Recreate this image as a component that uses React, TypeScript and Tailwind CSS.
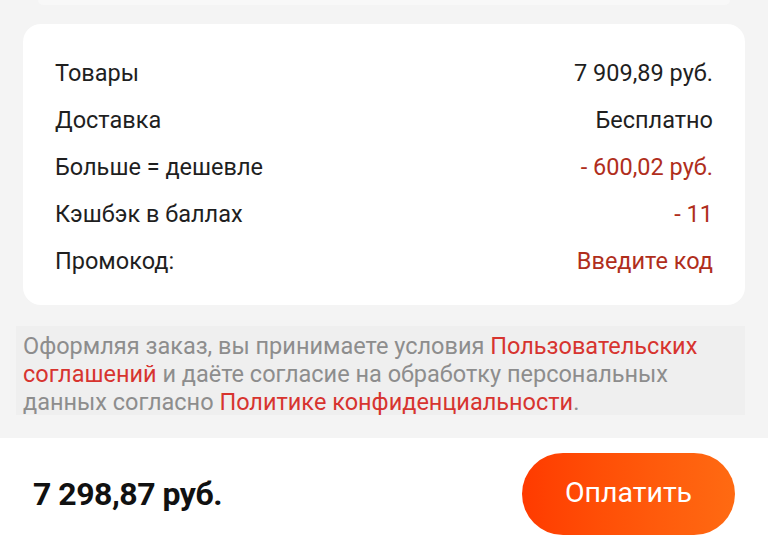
import React from "react";

const rows: { label: string; value: string; red?: boolean }[] = [
  { label: "Товары", value: "7 909,89 руб." },
  { label: "Доставка", value: "Бесплатно" },
  { label: "Больше = дешевле", value: "- 600,02 руб.", red: true },
  { label: "Кэшбэк в баллах", value: "- 11", red: true },
  { label: "Промокод:", value: "Введите код", red: true },
];

export default function App() {
  return (
    <div
      className="w-[768px] h-[549px] bg-[#f4f4f4] flex flex-col overflow-hidden"
      style={{ fontFamily: "Roboto, 'Noto Sans', sans-serif" }}
    >
      <div className="mx-[38px] h-[5px] bg-[#f8f8f8] rounded-b-[6px]" />
      <div className="mt-[19px] mx-[23px] w-[722px] h-[281px] bg-white rounded-[18px] pt-[26px] px-[32px] flex flex-col">
        {rows.map((r) => (
          <div key={r.label} className="flex justify-between items-center h-[47px]">
            <span className="text-[23.5px] text-[#1f1f1f] leading-none">{r.label}</span>
            <span className={`text-[23.5px] leading-none ${r.red ? "text-[#b02e1c]" : "text-[#1f1f1f]"}`}>
              {r.value}
            </span>
          </div>
        ))}
      </div>
      <div className="mt-[21px] ml-[16px] w-[729px] h-[89px] bg-[#efefef] pl-[7px] pr-[20px] pt-[6px]">
        <p className="text-[23.5px] leading-[28px] text-[#8d8d8d]">
          Оформляя заказ, вы принимаете условия{" "}
          <span className="text-[#d7342f]">Пользовательских соглашений</span> и даёте согласие на обработку персональных
          данных согласно <span className="text-[#d7342f]">Политике конфиденциальности</span>.
        </p>
      </div>
      <div className="mt-[23px] flex-1 bg-white flex items-center justify-between pl-[33px] pr-[33px]">
        <span className="text-[32px] font-bold text-[#111] tracking-[-0.5px]">7 298,87 руб.</span>
        <button className="w-[213px] h-[82px] rounded-full bg-gradient-to-r from-[#ff3a00] to-[#ff6a12] text-white text-[28.5px]">
          Оплатить
        </button>
      </div>
    </div>
  );
}
